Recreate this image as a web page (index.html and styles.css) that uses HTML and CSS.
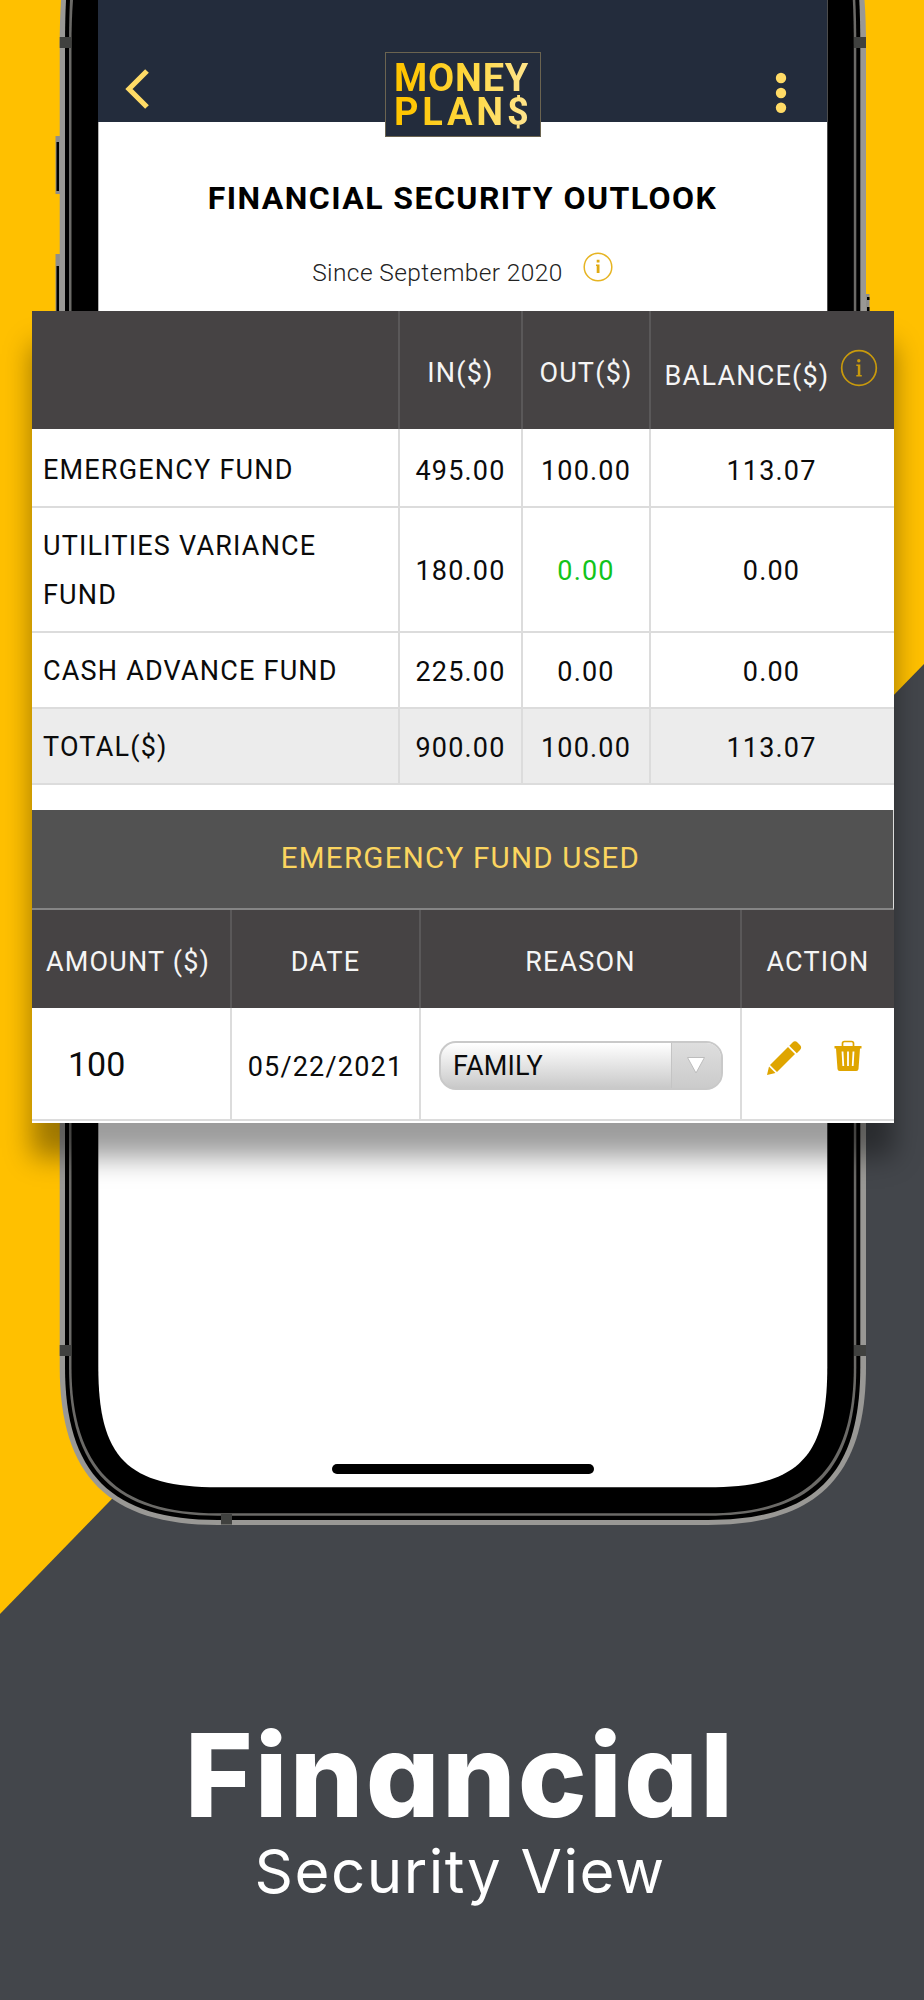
FILE: index.html
```html
<!DOCTYPE html>
<html lang="en">
<head>
    <meta charset="UTF-8">
    <meta name="viewport" content="width=device-width, initial-scale=1.0">
    <title>Money Plans - Financial Security View</title>
    <link rel="stylesheet" href="styles.css">
</head>
<body>
    <div class="stage">
        <div class="phone">
            <svg class="frame" viewBox="0 0 924 1540" width="924" height="1540">
                <!-- side buttons -->
                <path fill="#8f8e8b" d="M55.5 136h6v58h-6zM55.5 254h6v70h-6zM864 294h5.500v30h-5.500z"/>
                <path fill="#000" d="M56.500 142h2.500v49h-2.500zM56.500 266h2.500v60h-2.500zM867 297h2.500v3h-2.500zM867 307h2.500v9h-2.500z"/>
                <!-- body -->
                <path fill="#999895" d="M61 0Q59.700 20 59.700 45V1367C59.700 1476 108.700 1525 217.700 1525H708C817 1525 866 1476 866 1367V45Q866 20 864.500 0Z"/>
                <path fill="#000" d="M66 0Q65 20 65 45V1367C65 1474 112 1520 217.700 1520H708C815 1520 860.300 1474 860.300 1367V45Q860.300 20 859.300 0Z"/>
                <path fill="#6b6a67" d="M70 0Q69 20 69 45V1367C69 1471 115 1515.700 217.700 1515.700H708C811 1515.700 856.300 1471 856.300 1367V45Q856.300 20 855.300 0Z"/>
                <path fill="#000" d="M73 0Q71.500 20 71.500 45V1367C71.500 1468 117 1513.300 217.700 1513.300H708C808 1513.300 853.800 1468 853.800 1367V45Q853.800 20 852.800 0Z"/>
                <!-- antenna bands -->
                <path fill="#40413f" d="M59.700 37h11.800v11H59.700zM854 37h12v11h-12zM59.700 1345h11.800v11H59.700zM854 1345h12v11h-12zM221 1514h11v10.500h-11z"/>
                <path fill="#fff" d="M98.300 0H827.300V1367C827.300 1458 798.300 1487.300 707.300 1487.300H218.300C127.300 1487.300 98.300 1458 98.300 1367Z"/>
            </svg>
            <div class="screen">
                <div class="topbar">
                    <svg class="back" viewBox="0 0 26 42" width="26" height="42"><path d="M22 3 4 21l18 18" fill="none" stroke="#ffdb66" stroke-width="5.200"/></svg>
                    <div class="logo">
                        <span class="money">MONEY</span>
                        <span class="plans">PLAN$</span>
                    </div>
                    <svg class="dots" viewBox="0 0 12 42" width="12" height="42" fill="#ffdb66"><circle cx="6" cy="6" r="5.200"/><circle cx="6" cy="21" r="5.200"/><circle cx="6" cy="35.800" r="5.200"/></svg>
                </div>
                <h1>FINANCIAL SECURITY OUTLOOK</h1>
                <div class="since">
                    <span>Since September 2020</span>
                    <svg viewBox="0 0 30 30" width="30" height="30"><circle cx="15" cy="15" r="13.800" fill="none" stroke="#e6b422" stroke-width="1.500"/><path fill="#e0aa12" d="M13.700 7.800h2.800v2.600h-2.800zM13 12.500h3.500v8.500h-2.800v-7H13z"/></svg>
                </div>
                <div class="home-bar"></div>
            </div>
        </div>

        <div class="card">
            <table class="funds">
                <colgroup><col class="c-name"><col class="c-in"><col class="c-out"><col></colgroup>
                <tr class="head">
                    <th></th>
                    <th>IN($)</th>
                    <th>OUT($)</th>
                    <th>
                        <div class="balance">
                            <span>BALANCE($)</span>
                            <svg viewBox="0 0 38 38" width="38" height="38"><circle cx="19" cy="19" r="17.300" fill="none" stroke="#c99a0c" stroke-width="1.700"/><circle cx="18.800" cy="11.700" r="1.700" fill="#c99a0c"/><path fill="#c99a0c" d="M16.300 15.500h4v10.500h1.500v1.500h-5.500v-1.500h1.500v-9h-1.500z"/></svg>
                        </div>
                    </th>
                </tr>
                <tr class="row first"><td>EMERGENCY FUND</td><td>495.00</td><td>100.00</td><td>113.07</td></tr>
                <tr class="row tall"><td>UTILITIES VARIANCE<br>FUND</td><td>180.00</td><td class="green">0.00</td><td>0.00</td></tr>
                <tr class="row"><td>CASH ADVANCE FUND</td><td>225.00</td><td>0.00</td><td>0.00</td></tr>
                <tr class="row total"><td>TOTAL($)</td><td>900.00</td><td>100.00</td><td>113.07</td></tr>
            </table>

            <div class="band">EMERGENCY FUND USED</div>

            <table class="used">
                <colgroup><col class="c-amount"><col class="c-date"><col class="c-reason"><col></colgroup>
                <tr class="head"><th>AMOUNT ($)</th><th>DATE</th><th>REASON</th><th>ACTION</th></tr>
                <tr class="entry">
                    <td class="amount">100</td>
                    <td class="date">05/22/2021</td>
                    <td>
                        <div class="select">
                            <span>FAMILY</span>
                            <div class="arrow"><svg viewBox="0 0 20 19" width="20" height="19"><path d="M1.500 1.500h17L10 17z" fill="#fff" stroke="#bdbdbd" stroke-width="1"/></svg></div>
                        </div>
                    </td>
                    <td>
                        <div class="actions">
                            <svg viewBox="0 0 36 36" width="36" height="36" fill="#dfa500"><path d="M1 35 3 26.500 9.500 33zM4 25 22 7l7 7L11 32zM23.300 5.700l3.200-3.200q2.500-2.300 5 0l2.500 2.500q2.300 2.500 0 5l-3.200 3.200z"/></svg>
                            <svg viewBox="0 0 28 32" width="28" height="32"><path d="M8.500 6V3.500q0-2 2-2h7q2 0 2 2V6" fill="none" stroke="#dfa500" stroke-width="1.700"/><path fill="#dfa500" d="M.5 6h27v2.500h-1.500L24.500 29q-.2 2-2.200 2H5.700q-2 0-2.200-2L2 8.500H.5z"/><path d="m8.500 11.500.8 14.500M14 11.500V26M19.500 11.500 18.700 26" stroke="#fff" stroke-width="1.800"/></svg>
                        </div>
                    </td>
                </tr>
            </table>
        </div>
    </div>

    <div class="caption">
        <div class="big">Financial</div>
        <div class="small">Security View</div>
    </div>
</body>
</html>
```
FILE: styles.css
```css
* {
    box-sizing: border-box;
}
body {
    margin: 0;
    width: 924px;
    height: 2000px;
    overflow: hidden;
    background: #43464b;
    font-family: Roboto, sans-serif;
}
.stage {
    display: grid;
    height: 1700px;
    background: #ffc000;
    position: relative;
    isolation: isolate;
}
.stage::before {
    content: "";
    position: absolute;
    inset: 0;
    background: #43464b;
    clip-path: polygon(0 1614px, 924px 664px, 924px 1700px, 0 1700px);
    z-index: -1;
}
.phone, .card {
    grid-area: 1 / 1;
}
.phone {
    position: relative;
    height: 1540px;
}
.frame {
    position: absolute;
    top: 0;
    left: 0;
}
.screen {
    position: relative;
    display: flex;
    flex-direction: column;
    align-items: center;
    width: 729px;
    height: 1487px;
    margin-left: 98px;
}
.topbar {
    display: flex;
    justify-content: space-between;
    align-items: flex-start;
    width: 100%;
    height: 122px;
    padding: 0 40px 0 27px;
    background: #232c3c;
}
.back {
    margin-top: 68px;
}
.dots {
    margin-top: 72px;
}
.logo {
    width: 156px;
    height: 85px;
    margin-top: 52px;
    padding: 8px 0 0 8px;
    border: 1px solid #6b6450;
    background: #232c3c;
    font-size: 38px;
    font-weight: 700;
    line-height: 34px;
}
.logo span {
    display: block;
    width: 146px;
    background: linear-gradient(100deg, #ffc400 10%, #ffd83f 50%, #ffe48c 90%);
    -webkit-background-clip: text;
    background-clip: text;
    color: transparent;
}
.money {
    letter-spacing: 0.8px;
}
.plans {
    letter-spacing: 3.8px;
}
h1 {
    margin: 56px 0 0;
    font-size: 32px;
    line-height: 40px;
    letter-spacing: 1.45px;
    white-space: nowrap;
    color: #000;
}
.since {
    display: flex;
    gap: 20px;
    margin-top: 34px;
    font-size: 24.5px;
    font-weight: 300;
    line-height: 41px;
    letter-spacing: 0.4px;
    color: #222;
}
.home-bar {
    width: 262px;
    height: 10px;
    margin-top: auto;
    margin-bottom: 13px;
    border-radius: 5px;
    background: #000;
}
.card {
    position: relative;
    width: 862px;
    height: 812px;
    margin: 311px 0 0 32px;
    background: #fff;
    box-shadow: 0 34px 26px rgba(0, 0, 0, 0.39);
}
table {
    width: 862px;
    table-layout: fixed;
    border-spacing: 0;
    font-size: 27px;
    letter-spacing: 1.2px;
    color: #0b0b0b;
}
.c-name {
    width: 368px;
}
.c-in {
    width: 123px;
}
.c-out {
    width: 128px;
}
.c-amount {
    width: 200px;
}
.c-date {
    width: 189px;
}
.c-reason {
    width: 321px;
}
th {
    padding: 6px 0 0;
    background: #464344;
    border-right: 2px solid #5a5859;
    font-weight: 400;
    color: #f5f5f5;
}
td {
    padding: 3px 0 0;
    border-right: 2px solid #dcdcdc;
    border-bottom: 2px solid #dcdcdc;
    text-align: center;
}
th:last-child, td:last-child {
    border-right: none;
}
.funds .head {
    height: 118px;
}
.funds td:last-child {
    padding-right: 2px;
}
.funds td:first-child {
    padding-left: 11px;
    text-align: left;
    line-height: 49px;
}
.row {
    height: 76px;
}
.first {
    height: 79px;
}
.first td {
    padding-top: 6px;
}
.tall {
    height: 125px;
}
.total {
    background: #ececec;
}
.green {
    color: #12c41a;
}
.balance {
    display: flex;
    justify-content: center;
    gap: 11px;
    margin: -6px 2px 0 0;
}
.balance span {
    padding-top: 11px;
}
.band {
    height: 100px;
    margin-top: 25px;
    padding-right: 4px;
    border-right: 1px solid #ddd;
    border-bottom: 2px solid #858585;
    background: #525252;
    font-size: 29.5px;
    line-height: 97px;
    letter-spacing: 1.25px;
    text-align: center;
    color: #fbd55f;
}
.used .head {
    height: 98px;
}
.used th:first-child {
    padding-right: 6px;
}
.entry {
    height: 113px;
}
.amount {
    padding-top: 0;
    padding-left: 36px;
    font-size: 34px;
    letter-spacing: 0;
    text-align: left;
}
.date {
    padding-top: 6px;
}
.select {
    display: flex;
    justify-content: space-between;
    width: 284px;
    height: 49px;
    margin-left: 18px;
    border: 2px solid #c9c9c9;
    border-radius: 17px;
    background: linear-gradient(#fff, #c9c9c9);
    overflow: hidden;
    line-height: 46px;
    letter-spacing: 0.2px;
}
.select span {
    padding-left: 12px;
}
.arrow {
    display: flex;
    align-items: center;
    justify-content: center;
    width: 50px;
    padding-right: 1px;
    border-left: 1px solid #c4c4c4;
    background: linear-gradient(#dedede, #cbcbcb);
}
.actions {
    display: flex;
    gap: 32px;
    margin: -14px 0 0 24px;
}
.caption {
    padding-right: 4px;
    color: #fff;
    font-family: Inter, sans-serif;
    font-feature-settings: "cv11";
    text-align: center;
}
.big {
    font-size: 116px;
    font-weight: 800;
    line-height: 120px;
    letter-spacing: 2.2px;
    margin-top: 15px;
}
.small {
    font-size: 60px;
    line-height: 72px;
    letter-spacing: 1.5px;
}
```
